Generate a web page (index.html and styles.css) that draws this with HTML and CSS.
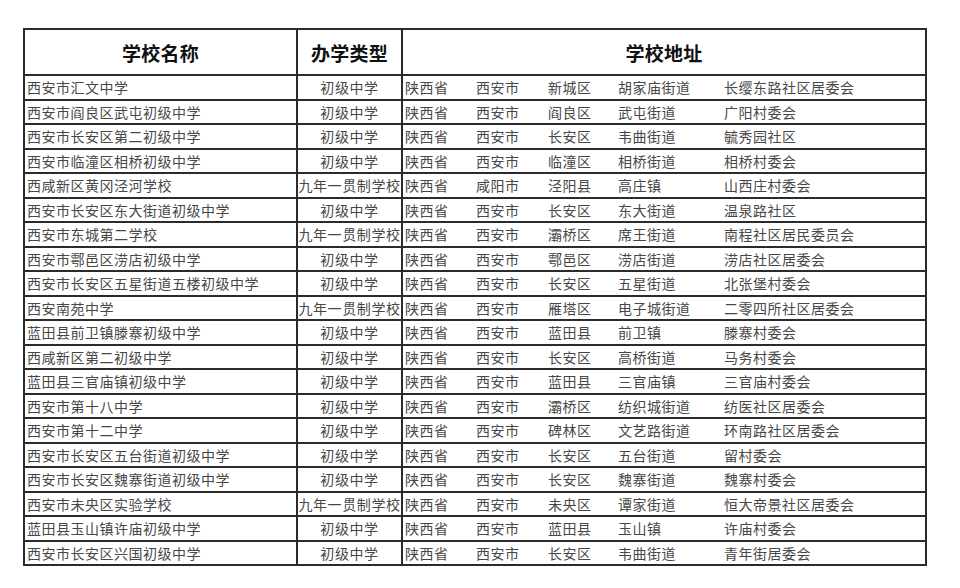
FILE: index.html
```html
<!DOCTYPE html>
<html lang="zh-CN">
<head>
<meta charset="utf-8">
<title>学校名单</title>
<link rel="stylesheet" href="styles.css">
</head>
<body>
<div class="page">
<table class="list">
  <colgroup>
    <col class="c-name"><col class="c-type"><col class="c-addr">
  </colgroup>
  <thead>
    <tr><th>学校名称</th><th>办学类型</th><th>学校地址</th></tr>
  </thead>
  <tbody id="rows">
    <tr><td class="name">西安市汇文中学</td><td class="type">初级中学</td><td class="addr"><span>陕西省</span><span>西安市</span><span>新城区</span><span>胡家庙街道</span><span>长缨东路社区居委会</span></td></tr>
    <tr><td class="name">西安市阎良区武屯初级中学</td><td class="type">初级中学</td><td class="addr"><span>陕西省</span><span>西安市</span><span>阎良区</span><span>武屯街道</span><span>广阳村委会</span></td></tr>
    <tr><td class="name">西安市长安区第二初级中学</td><td class="type">初级中学</td><td class="addr"><span>陕西省</span><span>西安市</span><span>长安区</span><span>韦曲街道</span><span>毓秀园社区</span></td></tr>
    <tr><td class="name">西安市临潼区相桥初级中学</td><td class="type">初级中学</td><td class="addr"><span>陕西省</span><span>西安市</span><span>临潼区</span><span>相桥街道</span><span>相桥村委会</span></td></tr>
    <tr><td class="name">西咸新区黄冈泾河学校</td><td class="type">九年一贯制学校</td><td class="addr"><span>陕西省</span><span>咸阳市</span><span>泾阳县</span><span>高庄镇</span><span>山西庄村委会</span></td></tr>
    <tr><td class="name">西安市长安区东大街道初级中学</td><td class="type">初级中学</td><td class="addr"><span>陕西省</span><span>西安市</span><span>长安区</span><span>东大街道</span><span>温泉路社区</span></td></tr>
    <tr><td class="name">西安市东城第二学校</td><td class="type">九年一贯制学校</td><td class="addr"><span>陕西省</span><span>西安市</span><span>灞桥区</span><span>席王街道</span><span>南程社区居民委员会</span></td></tr>
    <tr><td class="name">西安市鄠邑区涝店初级中学</td><td class="type">初级中学</td><td class="addr"><span>陕西省</span><span>西安市</span><span>鄠邑区</span><span>涝店街道</span><span>涝店社区居委会</span></td></tr>
    <tr><td class="name">西安市长安区五星街道五楼初级中学</td><td class="type">初级中学</td><td class="addr"><span>陕西省</span><span>西安市</span><span>长安区</span><span>五星街道</span><span>北张堡村委会</span></td></tr>
    <tr><td class="name">西安南苑中学</td><td class="type">九年一贯制学校</td><td class="addr"><span>陕西省</span><span>西安市</span><span>雁塔区</span><span>电子城街道</span><span>二零四所社区居委会</span></td></tr>
    <tr><td class="name">蓝田县前卫镇滕寨初级中学</td><td class="type">初级中学</td><td class="addr"><span>陕西省</span><span>西安市</span><span>蓝田县</span><span>前卫镇</span><span>滕寨村委会</span></td></tr>
    <tr><td class="name">西咸新区第二初级中学</td><td class="type">初级中学</td><td class="addr"><span>陕西省</span><span>西安市</span><span>长安区</span><span>高桥街道</span><span>马务村委会</span></td></tr>
    <tr><td class="name">蓝田县三官庙镇初级中学</td><td class="type">初级中学</td><td class="addr"><span>陕西省</span><span>西安市</span><span>蓝田县</span><span>三官庙镇</span><span>三官庙村委会</span></td></tr>
    <tr><td class="name">西安市第十八中学</td><td class="type">初级中学</td><td class="addr"><span>陕西省</span><span>西安市</span><span>灞桥区</span><span>纺织城街道</span><span>纺医社区居委会</span></td></tr>
    <tr><td class="name">西安市第十二中学</td><td class="type">初级中学</td><td class="addr"><span>陕西省</span><span>西安市</span><span>碑林区</span><span>文艺路街道</span><span>环南路社区居委会</span></td></tr>
    <tr><td class="name">西安市长安区五台街道初级中学</td><td class="type">初级中学</td><td class="addr"><span>陕西省</span><span>西安市</span><span>长安区</span><span>五台街道</span><span>留村委会</span></td></tr>
    <tr><td class="name">西安市长安区魏寨街道初级中学</td><td class="type">初级中学</td><td class="addr"><span>陕西省</span><span>西安市</span><span>长安区</span><span>魏寨街道</span><span>魏寨村委会</span></td></tr>
    <tr><td class="name">西安市未央区实验学校</td><td class="type">九年一贯制学校</td><td class="addr"><span>陕西省</span><span>西安市</span><span>未央区</span><span>谭家街道</span><span>恒大帝景社区居委会</span></td></tr>
    <tr><td class="name">蓝田县玉山镇许庙初级中学</td><td class="type">初级中学</td><td class="addr"><span>陕西省</span><span>西安市</span><span>蓝田县</span><span>玉山镇</span><span>许庙村委会</span></td></tr>
    <tr><td class="name">西安市长安区兴国初级中学</td><td class="type">初级中学</td><td class="addr"><span>陕西省</span><span>西安市</span><span>长安区</span><span>韦曲街道</span><span>青年街居委会</span></td></tr>
  </tbody>
</table>
</div>
</body>
</html>
```
FILE: styles.css
```css
html, body {
  margin: 0;
  padding: 0;
  background: #ffffff;
}
.page {
  padding: 28px 0 0 23px;
}
.list {
  border-collapse: collapse;
  table-layout: fixed;
  width: 902px;
  font-family: "Noto Sans CJK SC", "Noto Sans", sans-serif;
  color: #474747;
}
.c-name { width: 273px; }
.c-type { width: 105px; }
.c-addr { width: 524px; }
.list th, .list td {
  border: 2px solid #2b2b2b;
  padding: 0;
  white-space: nowrap;
  overflow: hidden;
}
.list th {
  height: 44px;
  font-size: 19px;
  font-weight: 700;
  color: #111;
  text-align: center;
  letter-spacing: 0.3px;
}
.list td {
  height: 22.5px;
  font-size: 14px;
  line-height: 20px;
  letter-spacing: 0.5px;
}
.list td.name {
  padding-left: 2px;
}
.list td.type {
  text-align: center;
  letter-spacing: 0.6px;
}
.list td.addr {
  padding-left: 2px;
}
.addr span {
  display: inline-block;
}
.addr span:nth-child(1) { width: 71px; }
.addr span:nth-child(2) { width: 72px; }
.addr span:nth-child(3) { width: 70px; }
.addr span:nth-child(4) { width: 106px; }
```
